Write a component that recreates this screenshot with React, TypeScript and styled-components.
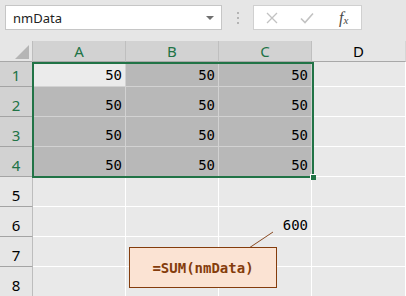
import { Fragment } from "react";
import styled, { createGlobalStyle } from "styled-components";

const GlobalStyle = createGlobalStyle`
html, body {
  margin: 0;
  padding: 0;
  background: #e6e6e6;
  overflow: hidden;
}
`;

const Page = styled.div`
width: 406px;
height: 296px;
overflow: hidden;
background: #e6e6e6;
font-family: "Noto Sans", "Open Sans", sans-serif;
`;

const TopBar = styled.div`
height: 41px;
box-sizing: border-box;
padding: 5px 0 0 5px;
display: flex;
align-items: flex-start;
`;

const NameBox = styled.div`
width: 217px;
height: 25px;
box-sizing: border-box;
background: #fff;
border: 1px solid #c6c6c6;
display: flex;
align-items: center;
justify-content: space-between;
padding: 0 7px 0 7px;
font-size: 13px;
color: #222;
`;

const DropArrow = styled.span`
width: 0;
height: 0;
border-left: 4px solid transparent;
border-right: 4px solid transparent;
border-top: 4px solid #6f6f6f;
`;

const Grip = styled.div`
width: 31px;
height: 25px;
display: flex;
flex-direction: column;
align-items: center;
justify-content: center;
gap: 3px;
`;

const GripDot = styled.span`
width: 2px;
height: 2px;
background: #b4b4b4;
`;

const FormulaBox = styled.div`
width: 109px;
height: 25px;
box-sizing: border-box;
background: #fff;
border: 1px solid #d0d0d0;
display: flex;
align-items: center;
padding-left: 12px;
gap: 22px;
`;

const Fx = styled.span`
font-family: "Liberation Serif", "DejaVu Serif", serif;
font-style: italic;
color: #4a4a4a;
font-size: 16px;
margin-left: 3px;
sub {
  font-size: 11px;
  vertical-align: -1px;
}
`;

const Sheet = styled.div`
position: relative;
display: grid;
grid-template-columns: 33px 93px 93px 93px 94px;
grid-template-rows: 21px 25px repeat(7, 30px);
`;

const Corner = styled.div`
background: #e6e6e6;
border-right: 1px solid #bdbdbd;
border-bottom: 1px solid #a8a8a8;
box-sizing: border-box;
display: flex;
align-items: flex-end;
justify-content: flex-end;
padding: 0 3px 2px 0;
`;

const CornerTriangle = styled.span`
width: 0;
height: 0;
border-left: 14px solid transparent;
border-bottom: 14px solid #b5b5b5;
`;

const ColHead = styled.div<{ $sel?: boolean }>`
background: ${(p) => (p.$sel ? "#d2d2d2" : "#e6e6e6")};
color: ${(p) => (p.$sel ? "#217346" : "#000")};
border-right: 1px solid ${(p) => (p.$sel ? "#bfbfbf" : "#d6d6d6")};
border-bottom: 1px solid #a8a8a8;
box-sizing: border-box;
display: flex;
align-items: center;
justify-content: center;
font-size: 15px;
`;

const RowHead = styled.div<{ $sel?: boolean }>`
background: ${(p) => (p.$sel ? "#d2d2d2" : "#e6e6e6")};
color: ${(p) => (p.$sel ? "#217346" : "#000")};
border-right: 1px solid #bdbdbd;
border-bottom: 1px solid #a4a4a4;
box-sizing: border-box;
display: flex;
align-items: flex-end;
justify-content: center;
padding-bottom: 1px;
font-size: 15px;
line-height: 20px;
`;

const Cell = styled.div<{ $tone: "active" | "sel" | "plain" }>`
background: ${(p) =>
  p.$tone === "active" ? "#ebebeb" : p.$tone === "sel" ? "#b8b8b8" : "#e9e9e9"};
border-right: 1px solid ${(p) => (p.$tone === "plain" ? "#ffffff" : "#d2d2d2")};
border-bottom: 1px solid ${(p) => (p.$tone === "plain" ? "#ffffff" : "#d2d2d2")};
box-sizing: border-box;
display: flex;
align-items: flex-end;
justify-content: flex-end;
padding: 0 3px 1px 0;
font-family: "DejaVu Sans Mono", "Liberation Mono", monospace;
font-size: 14px;
line-height: 19px;
color: #000;
`;

const Selection = styled.div`
position: absolute;
left: 32px;
top: 21px;
width: 282px;
height: 116px;
box-sizing: border-box;
border: 2px solid #217346;
pointer-events: none;
`;

const FillHandle = styled.span`
position: absolute;
right: -4px;
bottom: -4px;
width: 5px;
height: 5px;
background: #217346;
border-left: 1px solid #fff;
border-top: 1px solid #fff;
`;

const Callout = styled.div`
position: absolute;
left: 129px;
top: 206px;
width: 148px;
height: 41px;
box-sizing: border-box;
background: #fbe3d3;
border: 1px solid #843c0c;
display: flex;
align-items: center;
justify-content: center;
font-family: "DejaVu Sans Mono", "Liberation Mono", monospace;
font-weight: bold;
font-size: 14px;
color: #843c0c;
`;

const Leader = styled.svg`
position: absolute;
left: 246px;
top: 188px;
`;

const cols = ["A", "B", "C", "D"];
const rows = [1, 2, 3, 4, 5, 6, 7, 8];

export default function App() {
  return (
    <Page>
      <GlobalStyle />
      <TopBar>
        <NameBox>
          <span>nmData</span>
          <DropArrow />
        </NameBox>
        <Grip>
          <GripDot />
          <GripDot />
          <GripDot />
        </Grip>
        <FormulaBox>
          <svg width="12" height="12" viewBox="0 0 12 12">
            <path d="M1 1 L11 11 M11 1 L1 11" stroke="#c2c2c2" strokeWidth="1.3" fill="none" />
          </svg>
          <svg width="14" height="12" viewBox="0 0 14 12">
            <path d="M1 6.5 L5 10.5 L13 1.5" stroke="#c2c2c2" strokeWidth="1.6" fill="none" />
          </svg>
          <Fx>
            f<sub>x</sub>
          </Fx>
        </FormulaBox>
      </TopBar>
      <Sheet>
        <Corner>
          <CornerTriangle />
        </Corner>
        {cols.map((c) => (
          <ColHead key={c} $sel={c !== "D"}>
            {c}
          </ColHead>
        ))}
        {rows.map((r) => (
          <Fragment key={r}>
            <RowHead $sel={r <= 4}>{r}</RowHead>
            {cols.map((c) => {
              const inSel = r <= 4 && c !== "D";
              const tone = r === 1 && c === "A" ? "active" : inSel ? "sel" : "plain";
              let text = inSel ? "50" : "";
              if (r === 6 && c === "C") text = "600";
              return (
                <Cell key={c + r} $tone={tone}>
                  {text}
                </Cell>
              );
            })}
          </Fragment>
        ))}
        <Selection>
          <FillHandle />
        </Selection>
        <Leader width="30" height="22">
          <line x1="3" y1="19" x2="27" y2="3" stroke="#8a4a22" strokeWidth="1" />
        </Leader>
        <Callout>=SUM(nmData)</Callout>
      </Sheet>
    </Page>
  );
}
